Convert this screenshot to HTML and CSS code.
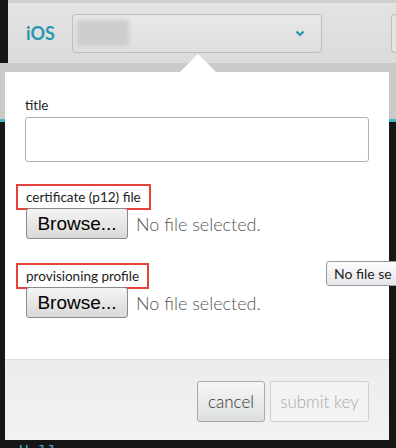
FILE: index.html
```html
<!DOCTYPE html>
<html lang="en">
<head>
    <meta charset="UTF-8">
    <title>iOS signing key</title>
    <link rel="stylesheet" href="styles.css">
</head>
<body>
<div class="backdrop">
    <div class="toolbar">
        <span class="platform">iOS</span>
        <div class="select">
            <span class="blurred"></span>
            <svg class="chevron" width="10" height="7" viewBox="0 0 10 7">
                <path d="M1.5 1.5 L5 5 L8.5 1.5" fill="none" stroke="#2a97b0" stroke-width="2.2"/>
            </svg>
        </div>
        <div class="select-stub"></div>
    </div>
    <div class="band"></div>
    <div class="editor"><span class="code">Hello</span></div>
</div>

<div class="popover">
    <div class="popover-body">
        <label class="field-label" for="title">title</label>
        <input class="text-input" id="title" type="text">

        <div class="file-field">
            <span class="field-label marked">certificate (p12) file</span>
            <div class="file-row">
                <button class="browse">Browse...</button>
                <span class="no-file">No file selected.</span>
            </div>
        </div>

        <div class="file-field second">
            <span class="field-label marked">provisioning profile</span>
            <div class="file-row">
                <button class="browse">Browse...</button>
                <span class="no-file">No file selected.</span>
            </div>
        </div>
    </div>
    <div class="popover-footer">
        <button class="btn">cancel</button>
        <button class="btn disabled">submit key</button>
    </div>
</div>

<div class="stray-file">No file se</div>
</body>
</html>
```

FILE: styles.css
```css
body {
    margin: 0;
    background: #161616;
    font-family: Lato, "Open Sans", sans-serif;
    color: #222;
    overflow: hidden;
}

.backdrop {
    height: 448px;
    display: flex;
    flex-direction: column;
}

.toolbar {
    flex-shrink: 0;
    margin: 3px 0 0 8px;
    height: 60px;
    padding-left: 18px;
    display: flex;
    align-items: center;
    background: linear-gradient(#e3e3e3, #dbdbdb);
    box-shadow: 0 -3px 0 #cfcfcf;
    overflow: hidden;
}

.platform {
    flex-shrink: 0;
    font-weight: bold;
    font-size: 18px;
    color: #2a97b0;
    width: 46px;
}

.select {
    flex-shrink: 0;
    width: 250px;
    height: 39px;
    box-sizing: border-box;
    border: 1px solid #bdbdbd;
    border-radius: 4px;
    background: linear-gradient(#e8e8e8, #dedede);
    display: flex;
    align-items: center;
    justify-content: space-between;
    padding: 0 16px 0 4px;
}

.blurred {
    width: 52px;
    height: 26px;
    background: #cdcdcd;
    filter: blur(2px);
}

.chevron {
    display: block;
}

.select-stub {
    flex-shrink: 0;
    margin-left: 69px;
    width: 20px;
    height: 39px;
    box-sizing: border-box;
    border: 1px solid #bdbdbd;
    border-right: none;
    border-radius: 4px 0 0 4px;
    background: #e6e6e6;
}

.band {
    flex-shrink: 0;
    height: 56px;
    background: #c9c9c9;
}

.editor {
    flex: 1;
    min-height: 0;
    overflow: hidden;
    border-top: 3px solid #3fb8c0;
    padding: 319px 0 0 19px;
}

.code {
    font-family: "DejaVu Sans Mono", monospace;
    font-size: 16px;
    color: #3aa7b8;
}

.popover {
    position: absolute;
    left: 5px;
    top: 72px;
    width: 384px;
    background: #fff;
}

.popover::before {
    content: "";
    position: absolute;
    left: 175px;
    top: -18px;
    border-left: 18px solid transparent;
    border-right: 18px solid transparent;
    border-bottom: 18px solid #fff;
}

.popover-body {
    height: 287px;
    box-sizing: border-box;
    padding: 25px 20px 0;
}

.field-label {
    display: block;
    font-size: 13.5px;
    line-height: 16px;
}

.text-input {
    display: block;
    margin-top: 4px;
    width: 344px;
    height: 45px;
    box-sizing: border-box;
    border: 1px solid #b0b0b0;
    border-radius: 3px;
}

.file-field {
    margin-top: 22px;
}

.file-field.second {
    margin-top: 24px;
}

.marked {
    display: inline-block;
    margin-left: -9px;
    border: 2px solid #e4433b;
    padding: 2px 8px;
    line-height: 18px;
}

.file-row {
    display: flex;
    align-items: center;
    margin-top: -2px;
}

.browse {
    margin-left: 1px;
    width: 102px;
    height: 31px;
    border: 1px solid #8a8a8a;
    border-radius: 3px;
    background: linear-gradient(#f4f4f4, #d9d9d9);
    font-family: "Liberation Sans", Arial, sans-serif;
    font-size: 19px;
    color: #000;
    padding: 0;
}

.no-file {
    margin-left: 8px;
    font-size: 18px;
    font-weight: 300;
    color: #555;
}

.popover-footer {
    height: 81px;
    box-sizing: border-box;
    border-top: 1px solid #dedede;
    background: linear-gradient(#ececec, #f2f2f2);
    padding: 21px 20px 0;
    display: flex;
    justify-content: flex-end;
    align-items: flex-start;
    gap: 5px;
}

.btn {
    height: 41px;
    width: 68px;
    padding: 0;
    border: 1px solid #a9a9a9;
    border-radius: 3px;
    background: linear-gradient(#f6f6f6, #dcdfe0);
    font-family: Lato, "Open Sans", sans-serif;
    font-size: 17px;
    font-weight: 300;
    color: #333;
}

.btn.disabled {
    border-color: #d0d0d0;
    background: #f3f3f3;
    color: #aaa;
    width: 99px;
}

.stray-file {
    position: absolute;
    left: 326px;
    top: 261px;
    width: 80px;
    height: 25px;
    box-sizing: border-box;
    border: 1px solid #9a9a9a;
    border-radius: 3px;
    background: linear-gradient(#fdfdfd, #e6e6ec);
    padding-left: 7px;
    font-family: Lato, sans-serif;
    font-size: 14px;
    line-height: 23px;
    white-space: nowrap;
    overflow: hidden;
}
```
